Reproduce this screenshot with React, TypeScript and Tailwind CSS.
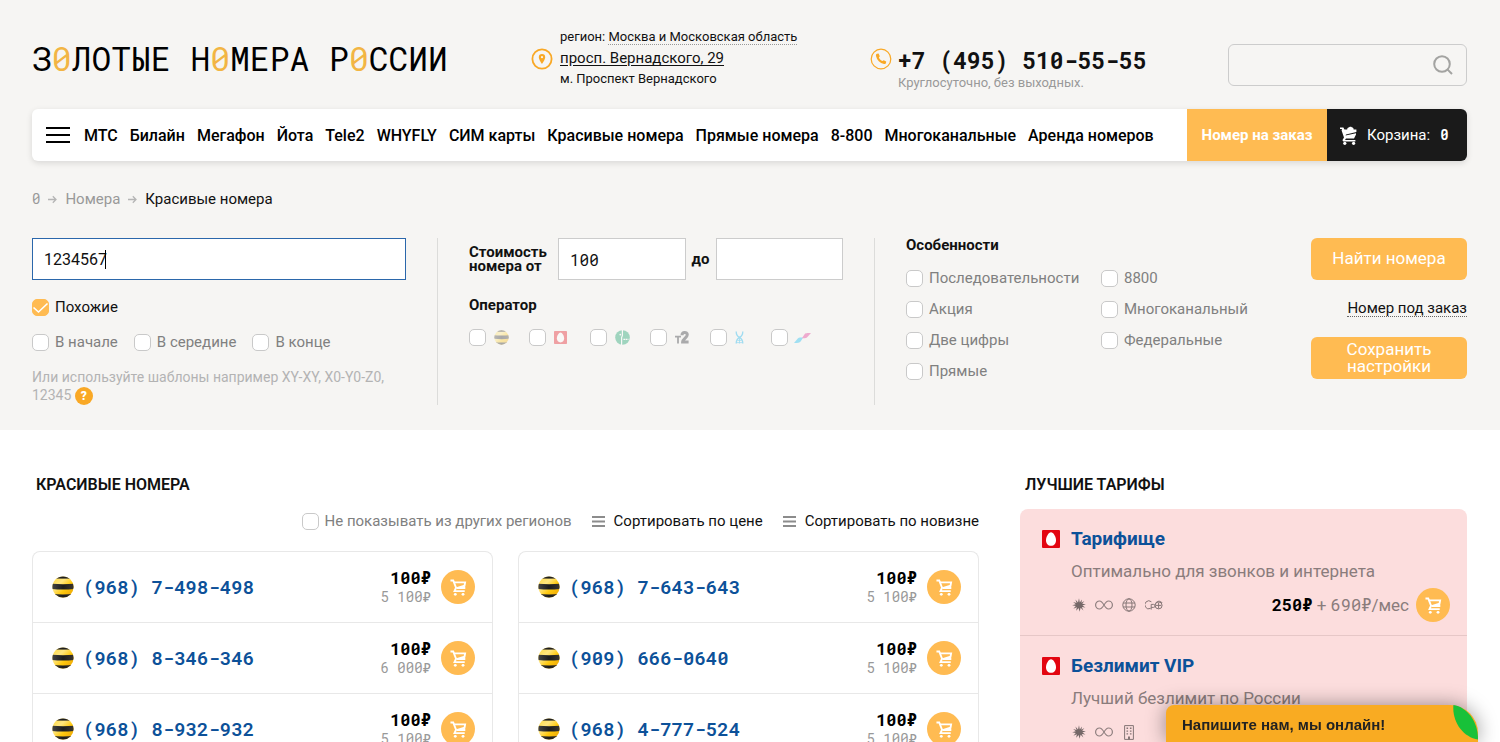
import type { ReactNode } from "react";

const MONO = "font-['Roboto_Mono','Liberation_Mono',monospace]";

const navLinks = [
  "МТС",
  "Билайн",
  "Мегафон",
  "Йота",
  "Tele2",
  "WHYFLY",
  "СИМ карты",
  "Красивые номера",
  "Прямые номера",
  "8-800",
  "Многоканальные",
  "Аренда номеров",
];

const features = [
  ["Последовательности", "Акция", "Две цифры", "Прямые"],
  ["8800", "Многоканальный", "Федеральные"],
];

type PhoneNumber = { number: string; price: string; oldPrice: string };

const numberColumns: PhoneNumber[][] = [
  [
    { number: "(968) 7-498-498", price: "100₽", oldPrice: "5 100₽" },
    { number: "(968) 8-346-346", price: "100₽", oldPrice: "6 000₽" },
    { number: "(968) 8-932-932", price: "100₽", oldPrice: "5 100₽" },
  ],
  [
    { number: "(968) 7-643-643", price: "100₽", oldPrice: "5 100₽" },
    { number: "(909) 666-0640", price: "100₽", oldPrice: "5 100₽" },
    { number: "(968) 4-777-524", price: "100₽", oldPrice: "5 100₽" },
  ],
];

function BeelineIcon({ id, className }: { id: string; className: string }) {
  return (
    <svg viewBox="0 0 22 22" className={className} aria-hidden>
      <defs>
        <clipPath id={`${id}-clip`}>
          <circle cx="11" cy="11" r="10.6" />
        </clipPath>
        <linearGradient id={`${id}-yellow`} x1="0" y1="0" x2="1" y2="1">
          <stop offset="0" stopColor="#ffd83a" />
          <stop offset="0.35" stopColor="#ffe680" />
          <stop offset="0.6" stopColor="#ffc90e" />
          <stop offset="1" stopColor="#e89c00" />
        </linearGradient>
        <linearGradient id={`${id}-black`} x1="0" y1="0" x2="1" y2="0">
          <stop offset="0" stopColor="#444444" />
          <stop offset="0.5" stopColor="#1c1c1c" />
          <stop offset="1" stopColor="#3a3630" />
        </linearGradient>
      </defs>
      <g clipPath={`url(#${id}-clip)`}>
        <rect width="22" height="22" fill={`url(#${id}-yellow)`} />
        <rect width="22" height="2.6" fill={`url(#${id}-black)`} />
        <path d="M0 7.8Q11 8.6 22 7.8V13Q11 14 0 13Z" fill={`url(#${id}-black)`} />
        <path d="M0 17.8Q11 19 22 17.8V22H0Z" fill={`url(#${id}-black)`} />
      </g>
    </svg>
  );
}

function MtsIcon({ className }: { className: string }) {
  return (
    <svg viewBox="0 0 18 18" className={className} aria-hidden>
      <rect width="18" height="18" rx="1" fill="#e30611" />
      <path d="M9 2.2C11.4 2.2 14 6.6 14 10.2C14 13.6 12 15.8 9 15.8S4 13.6 4 10.2C4 6.6 6.6 2.2 9 2.2Z" fill="#fff" />
    </svg>
  );
}

function MegafonIcon() {
  return (
    <svg viewBox="0 0 15 15" className="h-[15px] w-[15px]" aria-hidden>
      <circle cx="7.5" cy="7.5" r="7.3" fill="#00985f" />
      <path d="M7.4 0V5.4L6.6 7.6V15" fill="none" stroke="#fff" strokeWidth="1.2" />
      <path d="M8.4 9.4H13.4" fill="none" stroke="#fff" strokeWidth="1.2" strokeDasharray="1.8 .5" />
      <circle cx="5.3" cy="4.6" r="0.9" fill="#fff" />
    </svg>
  );
}

function Tele2Icon() {
  return (
    <svg viewBox="0 0 14 13" className="h-[13px] w-[14px]" fill="none" stroke="#1f2229" aria-hidden>
      <path d="M0 5.6H6M3 5V12.5" strokeWidth="1.8" />
      <path d="M7 4.2C7 .8 12.3 .6 12.3 3.8C12.3 6.6 7.6 8.2 7.6 11H13.6" strokeWidth="3" />
    </svg>
  );
}

function YotaIcon() {
  return (
    <svg viewBox="0 0 9 13" className="h-[13px] w-[9px]" fill="none" stroke="#00aeef" strokeWidth="1.3" aria-hidden>
      <path d="M1.2 .5C1.2 3.4 2.6 5.6 4.5 6.4C6.4 5.6 7.8 3.4 7.8 .5" />
      <path d="M1.2 12.5C1.2 9.4 2.6 7.4 4.5 6.4C6.4 7.4 7.8 9.4 7.8 12.5" />
      <path d="M1 11.6H8M2.4 9.4H6.6M4.5 6.5V12.5" strokeWidth="0.8" />
    </svg>
  );
}

function WhyflyIcon() {
  return (
    <svg viewBox="0 0 17 10" className="h-[10px] w-[17px]" aria-hidden>
      <path d="M0 10L4 5.2C5 4 6.4 4.6 9.2 4.6L6.6 8.4C5.6 9.8 4 10 0 10Z" fill="#00b9f2" />
      <path d="M8 5.2L10.4 1.4C11.4 0 13 0 17 0L13.4 4C12 5.4 10.6 5.2 8 5.2Z" fill="#e0218a" />
    </svg>
  );
}

function CartIcon({ className }: { className: string }) {
  return (
    <svg viewBox="0 0 18 18" className={className} fill="none" stroke="currentColor" strokeWidth="2" aria-hidden>
      <path d="M.5 1.6H3.4L6.4 9.2L4.8 12.8H15.6" />
      <path d="M4.2 3.6H16L15.4 7L7 9.6H15.2V6.8" />
      <circle cx="5.6" cy="16.2" r="1.5" fill="currentColor" stroke="none" />
      <circle cx="13.8" cy="16.2" r="1.5" fill="currentColor" stroke="none" />
    </svg>
  );
}

function HeaderCartIcon() {
  return (
    <svg viewBox="0 0 17 19" className="h-[19px] w-[17px]" fill="currentColor" aria-hidden>
      <path d="M0 1.4H3.4L4.4 3.6H7.2C7.2 2 8 1.6 9 1.6C9 .4 12 .4 12 1.6C13 1.6 13.6 2.2 13.6 3.6H16.4V6L6 8.4L5.6 9.4L16 7.2V8.6L14 12.6H6L5 14H15.4V15.4H3.6C2.6 15.4 2.4 14.4 2.8 13.6L4 11.6L1.6 4.6L2 3H0Z" />
      <circle cx="4.8" cy="17.3" r="1.6" />
      <circle cx="13.6" cy="17.3" r="1.6" />
    </svg>
  );
}

function PinIcon() {
  return (
    <svg viewBox="0 0 22 22" className="h-[22px] w-[22px]" aria-hidden>
      <circle cx="11" cy="11" r="9.6" fill="none" stroke="#f9a825" strokeWidth="1.8" />
      <path d="M11 6A3.2 3.2 0 0 0 7.8 9.2C7.8 11.6 11 16 11 16S14.2 11.6 14.2 9.2A3.2 3.2 0 0 0 11 6Z" fill="#f9a825" />
      <circle cx="11" cy="9.2" r="1.1" fill="#f6f5f3" />
    </svg>
  );
}

function PhoneIcon() {
  return (
    <svg viewBox="0 0 22 22" className="h-[22px] w-[22px]" aria-hidden>
      <circle cx="11" cy="11" r="9.8" fill="none" stroke="#f9a825" strokeWidth="1.2" />
      <path d="M7 5.8L8.6 5.6L9.8 8.2L8.9 9.4C9.6 11 10.9 12.3 12.5 13.1L13.7 12.2L16.2 13.5L16 15C15.8 15.8 14.8 16.2 14 16C9.8 15 7 12.2 6 8C5.8 7 6.2 6 7 5.8Z" fill="#f9a825" />
    </svg>
  );
}

function SearchIcon() {
  return (
    <svg viewBox="0 0 20 20" className="h-5 w-5" fill="none" stroke="#a3a3a1" strokeWidth="2" aria-hidden>
      <circle cx="9" cy="9" r="7.8" />
      <path d="M14.4 14.4L19 19" />
    </svg>
  );
}

function SortIcon() {
  return (
    <svg viewBox="0 0 13 11" className="mr-[9px] h-[11px] w-[13px]" stroke="#8c8c8c" strokeWidth="2.2" aria-hidden>
      <path d="M0 1H13M0 5.5H13M0 10H13" />
    </svg>
  );
}

function ArrowIcon() {
  return (
    <svg viewBox="0 0 9 9" className="h-[9px] w-[9px]" fill="none" stroke="#b5b5b5" strokeWidth="1.3" aria-hidden>
      <path d="M0 4.5H8M4.8 1.2L8 4.5L4.8 7.8" />
    </svg>
  );
}

function StarIcon() {
  return (
    <svg viewBox="0 0 14 14" className="h-[14px] w-[14px]" aria-hidden>
      <path
        d="M7 .2L7.8 4.4L10 1.6L9.4 4.8L12.4 3L10.2 5.8L13.8 6.2L10.4 7.4L13.4 9.4L9.8 9L11.4 12.4L8.6 9.8L7.6 13.8L6.6 10L4.2 12.8L4.8 9.2L1.4 10.8L3.8 8L.2 7.2L3.8 6.2L1.2 4L4.6 5L3.4 1.6L6 4.4Z"
        fill="#756868"
      />
    </svg>
  );
}

function InfinityIcon() {
  return (
    <svg viewBox="0 0 18 10" className="h-[10px] w-[18px]" fill="none" stroke="#8d7e7e" strokeWidth="1.2" aria-hidden>
      <path d="M9 5C7.4 2.4 6.2 1 4.6 1A4 4 0 0 0 4.6 9C6.2 9 7.4 7.6 9 5S11.8 1 13.4 1A4 4 0 0 1 13.4 9C11.8 9 10.6 7.6 9 5Z" />
    </svg>
  );
}

function GlobeIcon() {
  return (
    <svg viewBox="0 0 14 14" className="h-[14px] w-[14px]" fill="none" stroke="#857676" aria-hidden>
      <circle cx="7" cy="7" r="6.2" />
      <ellipse cx="7" cy="7" rx="3" ry="6.2" />
      <path d="M1 5H13M1 9H13" />
    </svg>
  );
}

function RoamingIcon() {
  return (
    <svg viewBox="0 0 18 10" className="h-[10px] w-[18px]" fill="none" stroke="#857676" aria-hidden>
      <path d="M6.4 1.8A4 4 0 1 0 5.6 8.4" />
      <path d="M6.2 9.6V4.4H8.6A1.5 1.5 0 0 1 8.6 7.4H6.2" />
      <circle cx="13.6" cy="5.4" r="3.5" />
      <path d="M11 5.4H16.4M13.6 2.6V8.6M10.8 3.4C11.6.8 15.6.4 17.2 3" />
    </svg>
  );
}

function BuildingIcon() {
  return (
    <svg viewBox="0 0 14 15" className="h-[15px] w-[14px]" fill="none" stroke="#857676" aria-hidden>
      <path d="M2.6.6H11.4V14.4H2.6Z" />
      <path d="M5.3 2.6V10.8M8.7 2.6V10.8" strokeWidth="1.6" strokeDasharray="1.4 1.4" />
      <path d="M7 11.4V14.4" strokeWidth="2" />
    </svg>
  );
}

function Checkbox({
  children,
  checked = false,
  ariaLabel,
}: {
  children: ReactNode;
  checked?: boolean;
  ariaLabel?: string;
}) {
  return (
    <label
      className={`flex items-center gap-[6px] text-[15px] leading-[18px] whitespace-nowrap ${checked ? "text-[#111]" : "text-[#808080]"}`}
    >
      <span className="relative flex h-[17px] w-[17px] shrink-0">
        <input
          type="checkbox"
          defaultChecked={checked}
          aria-label={ariaLabel}
          className="peer h-[17px] w-[17px] appearance-none rounded-[5px] border border-[#c9c9c9] bg-white checked:border-[#ffbb52] checked:bg-[#ffbb52]"
        />
        <svg
          viewBox="0 0 17 17"
          className="pointer-events-none absolute inset-0 hidden peer-checked:block"
          fill="none"
          stroke="#fff"
          strokeWidth="1.6"
          aria-hidden
        >
          <path d="M1.5 8.5L6.5 13L15.5 4.5" />
        </svg>
      </span>
      {children}
    </label>
  );
}

function Logo() {
  return (
    <a href="#" className={`${MONO} text-[33px] leading-[42px] whitespace-pre text-black`}>
      З<span className="text-[#f2b544]">0</span>ЛОТЫЕ Н<span className="text-[#f2b544]">0</span>МЕРА Р
      <span className="text-[#f2b544]">0</span>ССИИ
    </a>
  );
}

function Header() {
  return (
    <header className="grid h-[109px] grid-cols-[minmax(0,499fr)_minmax(0,339fr)_minmax(0,358fr)_minmax(0,239fr)] pt-7">
      <div className="pt-[9px]">
        <Logo />
      </div>
      <div className="flex gap-[7px] text-[13px] whitespace-nowrap text-[#111]">
        <div className="pt-5">
          <PinIcon />
        </div>
        <div>
          <p className="leading-[18px]">
            регион:{" "}
            <a href="#" className="border-b border-dotted border-[#999]">
              Москва и Московская область
            </a>
          </p>
          <p className="text-[15px] leading-6">
            <a href="#" className="underline underline-offset-2">
              просп. Вернадского, 29
            </a>
          </p>
          <p className="leading-[18px]">м. Проспект Вернадского</p>
        </div>
      </div>
      <div className="flex gap-[6px] whitespace-nowrap">
        <div className="pt-5">
          <PhoneIcon />
        </div>
        <div className="pt-[17px]">
          <a href="tel:+74955105555" className={`${MONO} block text-[23px] leading-[30px] font-bold text-[#111]`}>
            +7 (495) 510-55-55
          </a>
          <p className="text-[13px] leading-4 text-[#999]">Круглосуточно, без выходных.</p>
        </div>
      </div>
      <form className="mt-4 flex h-[42px] items-center rounded-md border border-[#ccc] pr-[13px]">
        <input type="search" aria-label="Поиск" className="h-full min-w-0 flex-1 px-3 outline-none" />
        <button type="submit" aria-label="Найти">
          <SearchIcon />
        </button>
      </form>
    </header>
  );
}

function Nav() {
  return (
    <nav className="flex h-[52px] items-stretch overflow-hidden rounded-md bg-white shadow-[0_2px_6px_rgba(0,0,0,0.12)]">
      <button type="button" aria-label="Меню" className="flex w-[38px] flex-col items-end justify-center gap-[5px]">
        <span className="h-[2px] w-6 bg-black" />
        <span className="h-[2px] w-6 bg-black" />
        <span className="h-[2px] w-6 bg-black" />
      </button>
      <ul className="ml-[14px] flex flex-1 items-center gap-3 pt-px text-base font-medium whitespace-nowrap text-black">
        {navLinks.map((link) => (
          <li key={link}>
            <a href="#">{link}</a>
          </li>
        ))}
      </ul>
      <a
        href="#"
        className="flex w-[140px] items-center justify-center bg-[#ffbb52] text-[15px] font-bold whitespace-nowrap text-white"
      >
        Номер на заказ
      </a>
      <a href="#" className="flex w-[140px] items-center bg-[#1a1a1a] pl-[13px] text-[15px] text-white">
        <HeaderCartIcon />
        <span className="ml-[10px]">Корзина:</span>
        <span className={`${MONO} ml-[10px] text-sm font-bold`}>0</span>
      </a>
    </nav>
  );
}

function Breadcrumbs() {
  return (
    <div className="mt-[26px] flex h-6 items-center gap-2 text-[15px] text-[#999]">
      <a href="#" className={`${MONO} text-sm`}>
        0
      </a>
      <ArrowIcon />
      <a href="#">Номера</a>
      <ArrowIcon />
      <span className="text-[#111]">Красивые номера</span>
    </div>
  );
}

function Filter() {
  return (
    <form className="mt-[27px] grid h-[167px] grid-cols-[minmax(0,406fr)_minmax(0,437fr)_minmax(0,436fr)_minmax(0,156fr)]">
      <div className="border-r border-[#dcdcda] pr-[31px]">
        <div className="relative">
          <input
            type="text"
            aria-label="Номер"
            defaultValue="1234567"
            className="h-[42px] w-full border border-[#2b67ab] bg-white px-[11px] text-base text-[#111] outline-none"
          />
          <span className="absolute top-3 left-[73px] h-[19px] w-px bg-black" />
        </div>
        <div className="mt-[18px]">
          <Checkbox checked>Похожие</Checkbox>
        </div>
        <div className="mt-[17px] flex gap-4">
          <Checkbox>В начале</Checkbox>
          <Checkbox>В середине</Checkbox>
          <Checkbox>В конце</Checkbox>
        </div>
        <p className="mt-[17px] text-sm leading-[18px] text-[#b3b3b3]">
          Или используйте шаблоны например XY-XY, X0-Y0-Z0, 12345{" "}
          <button
            type="button"
            className="h-[18px] w-[18px] rounded-full bg-[#f9a825] text-center text-xs leading-[18px] font-black text-white"
          >
            ?
          </button>
        </p>
      </div>

      <div className="border-r border-[#dcdcda] px-[31px]">
        <div className="flex items-center text-[15px] font-bold text-[#111]">
          <label htmlFor="price-from" className="w-[89px] shrink-0 leading-[14px]">
            Стоимость номера от
          </label>
          <input
            id="price-from"
            type="text"
            defaultValue="100"
            className={`${MONO} h-[42px] min-w-0 flex-1 border border-[#ccc] bg-white px-[11px] text-base font-normal outline-none`}
          />
          <label htmlFor="price-to" className="w-[30px] text-center">
            до
          </label>
          <input
            id="price-to"
            type="text"
            className={`${MONO} h-[42px] min-w-0 flex-1 border border-[#ccc] bg-white px-[11px] text-base font-normal outline-none`}
          />
        </div>
        <p className="mt-4 text-[15px] leading-[18px] font-bold text-[#111]">Оператор</p>
        <div className="mt-[15px] grid w-[362px] grid-cols-6">
          <Checkbox ariaLabel="Билайн">
            <span className="ml-[2px] opacity-35">
              <BeelineIcon id="filter-beeline" className="h-[15px] w-[15px]" />
            </span>
          </Checkbox>
          <Checkbox ariaLabel="МТС">
            <span className="ml-[2px] opacity-35">
              <MtsIcon className="h-[13px] w-[13px]" />
            </span>
          </Checkbox>
          <Checkbox ariaLabel="Мегафон">
            <span className="ml-[2px] opacity-35">
              <MegafonIcon />
            </span>
          </Checkbox>
          <Checkbox ariaLabel="Tele2">
            <span className="ml-[2px] opacity-35">
              <Tele2Icon />
            </span>
          </Checkbox>
          <Checkbox ariaLabel="Йота">
            <span className="ml-[2px] opacity-35">
              <YotaIcon />
            </span>
          </Checkbox>
          <Checkbox ariaLabel="WHYFLY">
            <span className="opacity-35">
              <WhyflyIcon />
            </span>
          </Checkbox>
        </div>
      </div>

      <fieldset className="min-w-0 pl-[31px]">
        <p className="text-[15px] leading-[14px] font-bold text-[#111]">Особенности</p>
        <div className="mt-[17px] flex">
          {features.map((column) => (
            <div key={column[0]} className="flex w-[195px] flex-col gap-[13px]">
              {column.map((feature) => (
                <Checkbox key={feature}>{feature}</Checkbox>
              ))}
            </div>
          ))}
        </div>
      </fieldset>

      <div className="flex flex-col items-end">
        <button type="submit" className="h-[42px] w-full rounded-md bg-[#ffbb52] text-[17px] text-white">
          Найти номера
        </button>
        <a href="#" className="mt-5 border-b border-dotted border-[#666] text-[15px] leading-4 text-[#111]">
          Номер под заказ
        </a>
        <button type="button" className="mt-5 h-[42px] w-full rounded-md bg-[#ffbb52] px-6 text-[17px] leading-[17px] text-white">
          Сохранить настройки
        </button>
      </div>
    </form>
  );
}

function CartButton() {
  return (
    <button
      type="button"
      aria-label="В корзину"
      className="flex h-[34px] w-[34px] shrink-0 items-center justify-center rounded-full bg-[#ffbb52] text-white"
    >
      <CartIcon className="h-[17px] w-[17px]" />
    </button>
  );
}

function NumberRow({ id, item }: { id: string; item: PhoneNumber }) {
  return (
    <li className="flex h-[71px] items-center border-b border-[#e8e8e8] pr-[17px] pl-[19px]">
      <BeelineIcon id={id} className="h-[22px] w-[22px]" />
      <a href="#" className={`${MONO} ml-[9px] flex-1 text-[19px] font-semibold text-[#0c5199]`}>
        {item.number}
      </a>
      <div className={`${MONO} mr-[10px] text-right`}>
        <p className="text-[17px] leading-5 font-bold text-black">{item.price}</p>
        <p className="text-sm leading-[18px] text-[#999]">{item.oldPrice}</p>
      </div>
      <CartButton />
    </li>
  );
}

function NumbersSection() {
  return (
    <section>
      <h1 className="pl-1 text-base leading-5 font-semibold text-[#111]">КРАСИВЫЕ НОМЕРА</h1>
      <div className="mt-4 flex items-center justify-end text-[15px] leading-5 text-[#111]">
        <Checkbox>Не показывать из других регионов</Checkbox>
        <button type="button" className="ml-5 flex items-center">
          <SortIcon />
          Сортировать по цене
        </button>
        <button type="button" className="ml-5 flex items-center">
          <SortIcon />
          Сортировать по новизне
        </button>
      </div>
      <div className="mt-5 grid grid-cols-2 gap-[25px]">
        {numberColumns.map((column, columnIndex) => (
          <ul key={columnIndex} className="rounded-t-lg border border-b-0 border-[#e8e8e8]">
            {column.map((item, rowIndex) => (
              <NumberRow key={item.number} id={`beeline-${columnIndex}-${rowIndex}`} item={item} />
            ))}
          </ul>
        ))}
      </div>
    </section>
  );
}

function Tariff({
  title,
  text,
  icons,
  price,
}: {
  title: string;
  text: string;
  icons: ReactNode;
  price: ReactNode;
}) {
  return (
    <li className="h-[127px] border-b border-[#e6c7c7] pt-4 pr-[17px] pl-[22px]">
      <div className="flex items-center gap-[11px]">
        <MtsIcon className="h-[18px] w-[18px]" />
        <a href="#" className="text-[19px] leading-7 font-bold text-[#0c5199]">
          {title}
        </a>
      </div>
      <div className="pl-[29px]">
        <p className="mt-2 text-[17px] leading-5 text-[#8a7c7c]">{text}</p>
        <div className="mt-[7px] flex h-[34px] items-center">
          <div className="flex flex-1 items-center gap-[9px] pl-px">{icons}</div>
          {price}
        </div>
      </div>
    </li>
  );
}

function TariffPrice({ price, monthly }: { price: string; monthly: string }) {
  return (
    <>
      <p className="mr-[7px] text-[17px] whitespace-nowrap text-[#8a7c7c]">
        <span className={`${MONO} font-bold text-black`}>{price}</span> +{" "}
        <span className={MONO}>{monthly}</span>/мес
      </p>
      <CartButton />
    </>
  );
}

function TariffsSection() {
  return (
    <section>
      <h2 className="pl-[5px] text-base leading-5 font-semibold text-[#111]">ЛУЧШИЕ ТАРИФЫ</h2>
      <ul className="mt-[14px] rounded-t-lg bg-[#fcdddd]">
        <Tariff
          title="Тарифище"
          text="Оптимально для звонков и интернета"
          icons={
            <>
              <StarIcon />
              <InfinityIcon />
              <GlobeIcon />
              <RoamingIcon />
            </>
          }
          price={<TariffPrice price="250₽" monthly="690₽" />}
        />
        <Tariff
          title="Безлимит VIP"
          text="Лучший безлимит по России"
          icons={
            <>
              <StarIcon />
              <InfinityIcon />
              <BuildingIcon />
            </>
          }
          price={null}
        />
      </ul>
    </section>
  );
}

function ChatWidget() {
  return (
    <button
      type="button"
      className="fixed right-[22px] bottom-0 h-[37px] w-[312px] rounded-tl-lg rounded-tr-[28px] bg-[#f9ab22] pt-1 pl-4 text-left font-['Liberation_Sans',Arial,sans-serif] text-[15px] font-bold text-[#222] shadow-[0_0_20px_rgba(0,0,0,0.4)]"
    >
      Напишите нам, мы онлайн!
      <svg viewBox="0 0 25 35" className="absolute top-0 right-0 h-[35px] w-[25px]" aria-hidden>
        <path d="M.4 0C14 2 25 16 25 34.5C10 32 -1 17 .4 0Z" fill="#18c139" />
      </svg>
    </button>
  );
}

export default function App() {
  return (
    <div className="h-screen overflow-hidden bg-white font-['Roboto','Liberation_Sans',sans-serif]">
      <div className="bg-[#f6f5f3] pr-[33px] pb-[25px] pl-8">
        <Header />
        <Nav />
        <Breadcrumbs />
        <Filter />
      </div>
      <main className="grid grid-cols-[947fr_447fr] gap-[41px] pt-[45px] pr-[33px] pl-8">
        <NumbersSection />
        <TariffsSection />
      </main>
      <ChatWidget />
    </div>
  );
}
